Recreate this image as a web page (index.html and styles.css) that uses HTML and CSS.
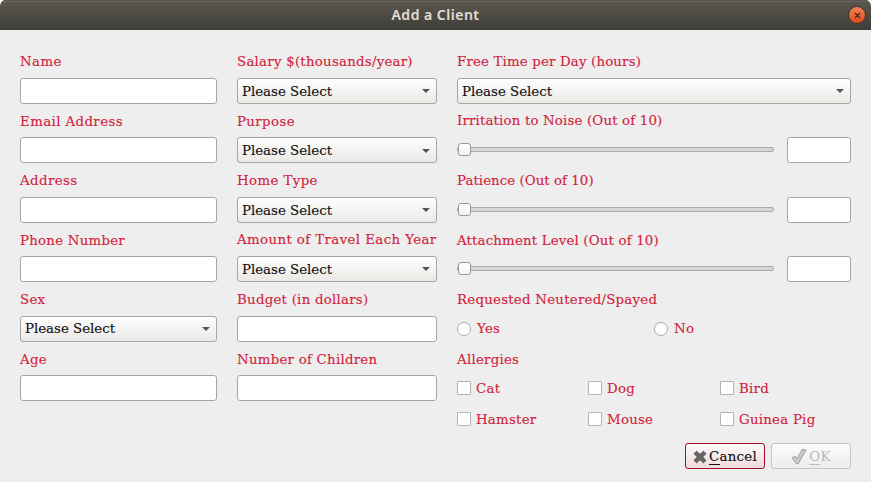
FILE: index.html
```
<!DOCTYPE html>
<html lang="en">
<head>
<meta charset="utf-8">
<title>Add a Client</title>
<link rel="stylesheet" href="styles.css">
</head>
<body>
<div class="window">
  <header class="titlebar">
    <span class="title">Add a Client</span>
    <span class="close"><svg width="7" height="7" viewBox="0 0 7 7"><path d="M1 1l5 5M6 1l-5 5" stroke="#4a2412" stroke-width="1.3"/></svg></span>
  </header>
  <main class="form">
    <section class="column">
      <div class="row"><label class="wide">Name</label><div class="input"></div></div>
      <div class="row"><label class="wide">Email Address</label><div class="input"></div></div>
      <div class="row"><label class="wide">Address</label><div class="input"></div></div>
      <div class="row"><label>Phone Number</label><div class="input"></div></div>
      <div class="row"><label>Sex</label><div class="select">Please Select</div></div>
      <div class="row"><label>Age</label><div class="input"></div></div>
    </section>
    <section class="column">
      <div class="row"><label>Salary $(thousands/year)</label><div class="select">Please Select</div></div>
      <div class="row"><label class="wide">Purpose</label><div class="select">Please Select</div></div>
      <div class="row"><label class="wide">Home Type</label><div class="select">Please Select</div></div>
      <div class="row"><label class="wide raised">Amount of Travel Each Year</label><div class="select">Please Select</div></div>
      <div class="row"><label>Budget (in dollars)</label><div class="input"></div></div>
      <div class="row"><label>Number of Children</label><div class="input"></div></div>
    </section>
    <section class="column">
      <div class="row"><label class="snug">Free Time per Day (hours)</label><div class="select">Please Select</div></div>
      <div class="row"><label class="snug raised">Irritation to Noise (Out of 10)</label><div class="range"><div class="slider"><i class="thumb"></i></div><div class="input"></div></div></div>
      <div class="row"><label class="tight">Patience (Out of 10)</label><div class="range"><div class="slider"><i class="thumb"></i></div><div class="input"></div></div></div>
      <div class="row"><label class="snug">Attachment Level (Out of 10)</label><div class="range"><div class="slider"><i class="thumb"></i></div><div class="input"></div></div></div>
      <div class="row"><label>Requested Neutered/Spayed</label><div class="radios"><span class="option"><i class="radio"></i><span>Yes</span></span><span class="option"><i class="radio"></i><span>No</span></span></div></div>
      <div class="row"><label>Allergies</label>
        <div class="checks">
          <span class="option"><i class="box"></i><span>Cat</span></span><span class="option"><i class="box"></i><span>Dog</span></span><span class="option"><i class="box"></i><span>Bird</span></span>
          <span class="option"><i class="box"></i><span>Hamster</span></span><span class="option"><i class="box"></i><span>Mouse</span></span><span class="option"><i class="box"></i><span>Guinea Pig</span></span>
        </div>
      </div>
    </section>
  </main>
  <footer class="actions">
    <div class="button cancel"><svg width="14" height="14" viewBox="0 0 14 14"><path d="M3.6 1.2L7 4.5l3.4-3.3 2.5 2.5L9.6 7l3.3 3.4-2.5 2.4L7 9.6l-3.4 3.2-2.5-2.4L4.4 7 1.1 3.7z" fill="#666865" stroke="#484a47" stroke-width=".9"/></svg><span><span class="key">C</span>ancel</span></div>
    <div class="button ok"><svg width="16" height="17" viewBox="0 0 16 17"><path d="M1 9.8l3.2-1.7 1.9 2.5L11.2 1.2l3.8.9-7.6 13.6H5.2z" fill="#c9c9c8" stroke="#a3a3a2" stroke-linejoin="round"/></svg><span><span class="key">O</span>K</span></div>
  </footer>
</div>
</body>
</html>
```
FILE: styles.css
```
* { box-sizing: border-box; }
body { margin: 0; background: #fff; font: 13.33px/20px "DejaVu Serif", serif; letter-spacing: .25px; color: #111; -webkit-text-stroke: .15px currentColor; }
.window { width: 871px; height: 482px; overflow: hidden; background: #eee; border-radius: 6px 6px 0 0; }
.titlebar { position: relative; height: 30px; display: flex; align-items: center; justify-content: center; background: linear-gradient(#5b584f, #3e3d38); box-shadow: inset 0 1px #55534c, inset 0 2px #68665d; }
.title { font: 600 14px/30px "Noto Sans", sans-serif; letter-spacing: .5px; color: #dfdbd2; }
.close { position: absolute; right: 5px; top: 6px; width: 18px; height: 18px; border: 1px solid #373630; border-radius: 50%; background: linear-gradient(#f4835c, #df4b19); display: flex; align-items: center; justify-content: center; }
.form { display: grid; grid-template-columns: 197px 200px 394px; column-gap: 20px; padding: 21.4px 20px 0; height: 413px; }
.row { height: 59.45px; }
label { display: block; height: 20px; padding-top: 1px; margin-bottom: 6.5px; color: #d21f3d; white-space: nowrap; }
.wide { letter-spacing: .4px; }
.snug { letter-spacing: .17px; }
.tight { letter-spacing: .05px; }
.raised { padding-top: 0; }
.input, .select { height: 26px; border: 1px solid #a5a5a5; border-radius: 3px; background: #fff; }
.select { display: flex; align-items: center; justify-content: space-between; padding: 1.5px 6px 0 4px; letter-spacing: 0; background: linear-gradient(#fefefe, #ebe9e6); }
.select::after { content: ""; margin-bottom: 1px; border: 4.5px solid transparent; border-top-color: #555; border-bottom: 0; }
.range { display: flex; align-items: center; justify-content: space-between; }
.range .input { width: 64px; }
.slider { width: 317px; height: 5px; margin-bottom: 1px; border: 1px solid #aaa; border-radius: 2px; background: #d8d7d4; display: flex; align-items: center; }
.thumb { flex: none; width: 13px; height: 13px; border: 1px solid #989898; border-radius: 3px; background: linear-gradient(#fff, #f4f3f2); }
.option { display: flex; align-items: center; height: 20px; color: #d21f3d; gap: 5px; }
.option span { padding-top: 1.5px; }
.radios { display: grid; grid-template-columns: 197px 197px; height: 26px; align-items: center; }
.radios .option { gap: 6px; }
.radio, .box { width: 14px; height: 14px; background: #fff; border: 1px solid #aaa; }
.radio { border-radius: 50%; }
.box { border-color: #b4b4b4; border-radius: 1px; }
.checks { display: grid; grid-template-columns: 131px 132px 131px; row-gap: 11px; padding-top: 3px; }
.actions { display: flex; justify-content: flex-end; gap: 6px; padding-right: 20px; }
.button { width: 80px; height: 26px; padding-top: 1px; border: 1px solid #c4c4c4; border-radius: 3px; display: flex; align-items: center; justify-content: center; gap: 2px; background: linear-gradient(#fcfcfb, #eeecea); color: #bdbdbd; }
.cancel { border-color: #a40c2b; background: linear-gradient(#fdfafa, #efdadd); color: #111; }
.key { border-bottom: 1px solid currentColor; }
```
